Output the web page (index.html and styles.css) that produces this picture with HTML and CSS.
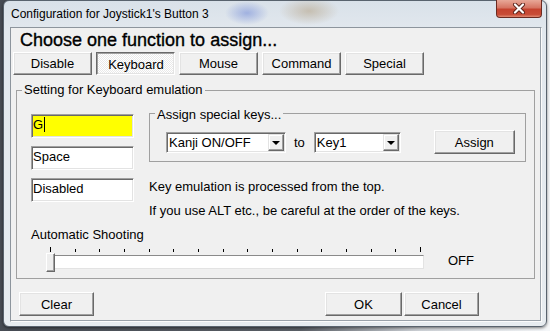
FILE: index.html
```html
<!DOCTYPE html>
<html lang="en">
<head>
    <meta charset="UTF-8">
    <title>Configuration for Joystick1's Button 3</title>
    <link rel="stylesheet" href="styles.css">
</head>
<body>
    <div class="window">
        <div class="titlebar">
            <span class="title">Configuration for Joystick1's Button 3</span>
            <div class="close-btn">
                <svg width="14" height="11" viewBox="0 0 14 11">
                    <path d="M3 1.5 L11 9.5 M11 1.5 L3 9.5" stroke="#5b231a" stroke-width="4" stroke-linecap="round"/>
                    <path d="M3 1.5 L11 9.5 M11 1.5 L3 9.5" stroke="#fff" stroke-width="2.2" stroke-linecap="round"/>
                </svg>
            </div>
        </div>

        <div class="client">
            <h1 class="heading">Choose one function to assign...</h1>

            <div class="tabs">
                <div class="btn tab">Disable</div>
                <div class="btn tab pressed">Keyboard</div>
                <div class="btn tab">Mouse</div>
                <div class="btn tab">Command</div>
                <div class="btn tab">Special</div>
            </div>

            <fieldset class="group main-group">
                <legend>Setting for Keyboard emulation</legend>
                <div class="keys-row">
                    <div class="key-fields">
                        <div class="field active">G<span class="caret"></span></div>
                        <div class="field">Space</div>
                        <div class="field">Disabled</div>
                    </div>
                    <div class="right-col">
                        <fieldset class="group special-group">
                            <legend>Assign special keys...</legend>
                            <div class="combo-row">
                                <div class="combo combo-wide">Kanji ON/OFF<span class="drop"></span></div>
                                <span class="to">to</span>
                                <div class="combo combo-narrow">Key1<span class="drop"></span></div>
                                <div class="btn assign">Assign</div>
                            </div>
                        </fieldset>
                        <p class="note first">Key emulation is processed from the top.</p>
                        <p class="note">If you use ALT etc., be careful at the order of the keys.</p>
                    </div>
                </div>

                <div class="auto-label">Automatic Shooting</div>
                <div class="slider-row">
                    <div class="slider">
                        <div class="ticks">
                            <i class="tick long"></i><i class="tick"></i><i class="tick"></i><i class="tick"></i>
                            <i class="tick"></i><i class="tick"></i><i class="tick"></i><i class="tick"></i>
                            <i class="tick"></i><i class="tick"></i><i class="tick"></i><i class="tick"></i>
                            <i class="tick"></i><i class="tick"></i><i class="tick"></i><i class="tick long"></i>
                        </div>
                        <div class="track"></div>
                        <div class="thumb"></div>
                    </div>
                    <span class="slider-value">OFF</span>
                </div>
            </fieldset>

            <div class="footer">
                <div class="btn clear">Clear</div>
                <div class="spacer"></div>
                <div class="btn ok">OK</div>
                <div class="btn cancel">Cancel</div>
            </div>
        </div>
    </div>
</body>
</html>
```

FILE: styles.css
```css
* {
    box-sizing: border-box;
}
body {
    margin: 0;
    width: 550px;
    height: 331px;
    overflow: hidden;
    font-family: "Liberation Sans", Arial, sans-serif;
    font-size: 13px;
    color: #000;
    background: linear-gradient(to right, #474c54 0, #5a5f66 300px, #cfd3d8 420px, #f5f7f9 547px);
}

/* window frame */
.window {
    margin-left: 3px;
    width: 544px;
    height: 327px;
    padding: 0 4px 0 6px;
    border: 1px solid #59636e;
    border-radius: 6px;
    background:
        radial-gradient(ellipse 22px 12px at 243px 12px, rgba(140, 160, 220, 0.75), transparent),
        radial-gradient(ellipse 30px 14px at 305px 10px, rgba(190, 178, 158, 0.75), transparent),
        linear-gradient(to bottom, #d9e1e9 0, #e2e8ee 30px, #e7ecf0 100%);
    box-shadow: 0 1px 3px rgba(0, 0, 0, 0.5);
}
.titlebar {
    display: flex;
    justify-content: space-between;
    align-items: flex-start;
    height: 26px;
}
.title {
    font-size: 12px;
    line-height: 16px;
    padding: 5px 0 0 1px;
    color: #000;
}
.close-btn {
    width: 46px;
    height: 18px;
    margin-top: -1px;
    display: flex;
    align-items: center;
    justify-content: center;
    border: 1px solid #6b2a20;
    border-top: none;
    border-radius: 0 0 4px 4px;
    background: linear-gradient(to bottom, #e8a898 0, #d67563 45%, #c5432f 55%, #c84c36 85%, #e08a72 100%);
}
.close-btn svg {
    margin-top: -1px;
}

/* client area */
.client {
    width: 532px;
    height: 295px;
    background-color: #f0f0f0;
    border: 1px solid;
    border-color: #8d959d #fbfbfb #fbfbfb #8d959d;
    box-shadow: inset -1px -1px 0 #9aa2aa;
}
.heading {
    margin: 2px 0 0 9px;
    font-size: 18px;
    line-height: 20px;
    font-weight: normal;
    -webkit-text-stroke: 0.35px #000;
}

/* 3d buttons */
.btn {
    display: flex;
    align-items: center;
    justify-content: center;
    height: 23px;
    background-color: #f0f0f0;
    border: 1px solid;
    border-color: #fff #696969 #696969 #fff;
    box-shadow: inset -1px -1px 0 #a0a0a0, inset 1px 1px 0 #e3e3e3;
    line-height: 15px;
}
.btn.pressed {
    border-color: #696969 #fff #fff #696969;
    box-shadow: inset 1px 1px 0 #a0a0a0, inset -1px -1px 0 #e3e3e3;
    background: repeating-conic-gradient(#fff 0 25%, #e9e9e9 0 50%) 0 0 / 2px 2px;
    padding-top: 2px;
    padding-left: 1px;
}
.tabs {
    display: flex;
    gap: 4px;
    margin: 2px 0 0 2px;
}
.tab {
    width: 79px;
}

/* group boxes */
.group {
    margin: 0;
    min-width: 0;
    border: 1px solid #a0a0a0;
}
.group legend {
    padding: 0 2px 1px;
    line-height: 12px;
}
.main-group {
    width: 519px;
    margin: 9px 0 0 5px;
    padding: 9px 8px 6px 5px;
}
.keys-row {
    display: flex;
    align-items: flex-start;
}
.key-fields {
    display: flex;
    flex-direction: column;
    gap: 8px;
    width: 104px;
    margin: 8px 0 0 9px;
}
.field {
    height: 24px;
    padding: 0 0 0 1px;
    line-height: 20px;
    background-color: #fff;
    border: 1px solid;
    border-color: #a0a0a0 #fff #fff #a0a0a0;
    box-shadow: inset 1px 1px 0 #696969, inset -1px -1px 0 #e3e3e3;
}
.field.active {
    background-color: #ffff00;
}
.caret {
    display: inline-block;
    width: 1px;
    height: 15px;
    margin-left: 1px;
    vertical-align: -3px;
    background-color: #000;
}
.right-col {
    margin-left: 15px;
}
.special-group {
    width: 377px;
    padding: 9px 0 7px 5px;
}
.special-group legend {
    padding: 2px 2px 0;
    line-height: 13px;
}
.combo-row {
    display: flex;
    align-items: center;
    height: 24px;
    margin-left: 11px;
}
.combo {
    display: flex;
    align-items: center;
    justify-content: space-between;
    height: 21px;
    padding: 0 1px 0 2px;
    background-color: #fff;
    border: 1px solid;
    border-color: #a0a0a0 #fff #fff #a0a0a0;
    box-shadow: inset 1px 1px 0 #696969, inset -1px -1px 0 #e3e3e3;
}
.combo-wide {
    width: 120px;
}
.combo-narrow {
    width: 87px;
}
.drop {
    position: relative;
    width: 16px;
    height: 17px;
    background-color: #f0f0f0;
    border: 1px solid;
    border-color: #e3e3e3 #696969 #696969 #e3e3e3;
    box-shadow: inset -1px -1px 0 #a0a0a0, inset 1px 1px 0 #fff;
}
.drop::after {
    content: "";
    position: absolute;
    left: 3px;
    top: 6px;
    border-left: 4px solid transparent;
    border-right: 4px solid transparent;
    border-top: 4px solid #000;
}
.to {
    margin: 0 9px 0 8px;
}
.assign {
    width: 81px;
    height: 24px;
    margin-left: 33px;
}
.note {
    margin: 9px 0 0;
    line-height: 15px;
}
.note.first {
    margin-top: 17px;
}

/* slider */
.auto-label {
    margin: 9px 0 0 9px;
    line-height: 15px;
}
.slider-row {
    display: flex;
    align-items: flex-start;
    margin-left: 24px;
}
.slider {
    position: relative;
    width: 379px;
    height: 30px;
}
.ticks {
    display: flex;
    justify-content: space-between;
    align-items: flex-end;
    width: 371px;
    height: 5px;
    margin: 5px 0 0 4px;
}
.tick {
    width: 1px;
    height: 3px;
    background-color: #000;
}
.tick.long {
    height: 5px;
}
.track {
    width: 372px;
    height: 14px;
    margin: 3px 0 0 6px;
    background-color: #fff;
    border: 1px solid;
    border-color: #8a8a8a #e3e3e3 #e3e3e3 #a0a0a0;
}
.thumb {
    position: absolute;
    left: 0;
    top: 11px;
    width: 9px;
    height: 19px;
    background-color: #eeeeee;
    border: 1px solid;
    border-color: #fff #696969 #696969 #fff;
    box-shadow: inset -1px -1px 0 #a0a0a0;
}
.slider-value {
    margin: 11px 0 0 23px;
    line-height: 15px;
}

/* bottom buttons */
.footer {
    display: flex;
    margin-top: 13px;
    padding: 0 62px 0 8px;
}
.footer .btn {
    height: 24px;
}
.clear {
    width: 75px;
}
.spacer {
    flex: 1;
}
.ok {
    width: 77px;
}
.cancel {
    width: 75px;
    margin-left: 2px;
}
```
